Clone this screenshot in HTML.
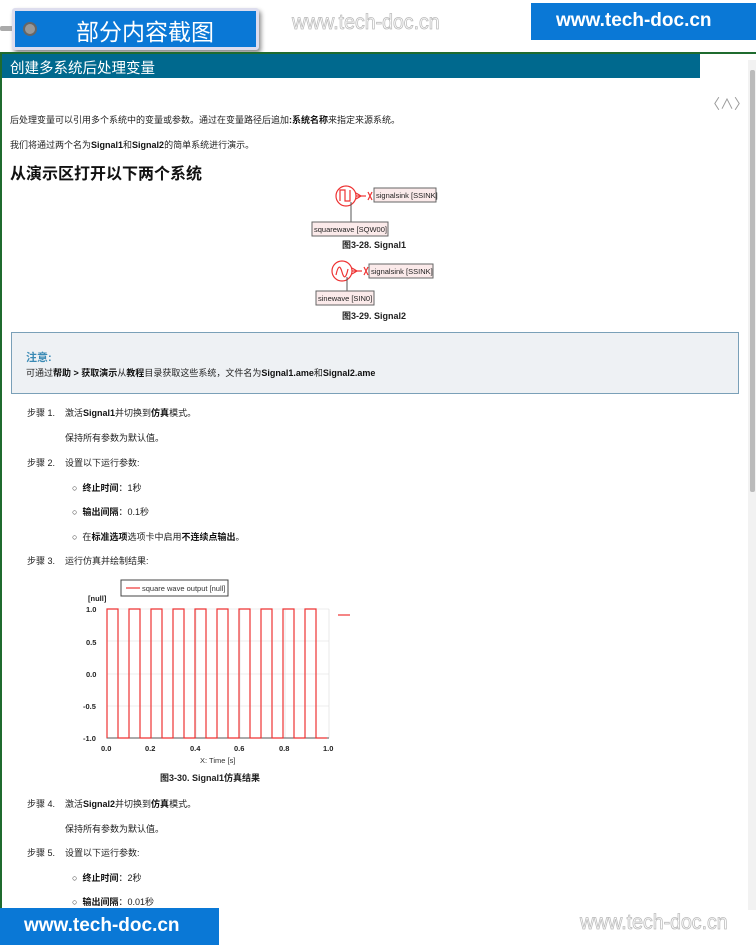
<!DOCTYPE html>
<html><head><meta charset="utf-8"><style>
*{margin:0;padding:0;box-sizing:border-box}
body{width:756px;height:945px;position:relative;overflow:hidden;background:#fff;font-family:"Liberation Sans","Noto Sans CJK SC",sans-serif;font-size:9px;color:#222}
.a{position:absolute;white-space:nowrap}
b{font-weight:bold;color:#111}
</style></head><body>
<!-- top badge -->
<div class="a" style="left:0;top:26px;width:30px;height:5px;background:#aaa;border-radius:2px"></div>
<div class="a" style="left:12px;top:8px;width:247px;height:42px;background:#0a78d6;border:3px solid #dde;box-shadow:2px 3px 5px #888;border-radius:3px"></div>
<div class="a" style="left:23px;top:22px;width:14px;height:14px;border-radius:50%;background:#999;border:2px solid #666"></div>
<div class="a" style="left:76px;top:13px;font-size:23px;color:#fff;font-family:'Noto Sans CJK SC',sans-serif">部分内容截图</div>
<div class="a" style="left:292px;top:11px;font-size:21px;color:#fff;-webkit-text-stroke:0.8px #bbb;transform:scaleX(0.93);transform-origin:left">www.tech-doc.cn</div>
<div class="a" style="left:531px;top:3px;width:225px;height:37px;background:#0a78d6"></div>
<div class="a" style="left:556px;top:10px;font-size:19px;color:#fff;font-weight:bold">www.tech-doc.cn</div>
<!-- frame -->
<div class="a" style="left:0;top:52px;width:756px;height:860px;border-left:2px solid #1f6b2e;border-top:2px solid #1f6b2e"></div>
<div class="a" style="left:2px;top:54px;width:698px;height:24px;background:#00698e"></div>
<div class="a" style="left:10px;top:57px;font-size:14.5px;color:#fff;font-family:'Noto Sans CJK SC',sans-serif">创建多系统后处理变量</div>
<div class="a" style="left:748px;top:60px;width:8px;height:850px;background:#f2f2f2"></div>
<div class="a" style="left:750px;top:70px;width:5px;height:422px;background:#bbb;border-radius:2px"></div>
<div class="a" style="left:706px;top:94px;font-size:14px;color:#999">〈∧〉</div>
<div class="a" style="left:10px;top:113px">后处理变量可以引用多个系统中的变量或参数。通过在变量路径后追加<b>:系统名称</b>来指定来源系统。</div>
<div class="a" style="left:10px;top:138px">我们将通过两个名为<b>Signal1</b>和<b>Signal2</b>的简单系统进行演示。</div>
<div class="a" style="left:10px;top:160px;font-size:16px;font-weight:bold;color:#111;font-family:'Noto Sans CJK SC',sans-serif">从演示区打开以下两个系统</div>
<!-- diagrams -->
<svg class="a" style="left:300px;top:180px" width="150" height="140">
<g stroke="#e33" fill="none" stroke-width="1.2"><circle cx="46" cy="16" r="10"/><path d="M40 21V10h5v11h5V10"/><path d="M56 16h10"/><path d="M56 13l5 3-5 3"/><path d="M68 12l4 8M72 12l-4 8"/></g>
<path d="M51 22v26" stroke="#555"/>
<rect x="74" y="8" width="62" height="14" fill="#fbeaea" stroke="#666"/>
<text x="76" y="18" font-size="7.5" fill="#222" font-family="Liberation Sans">signalsink [SSINK]</text>
<rect x="12" y="42" width="76" height="14" fill="#fbeaea" stroke="#666"/>
<text x="14" y="52" font-size="7.5" fill="#222" font-family="Liberation Sans">squarewave [SQW00]</text>
<g stroke="#e33" fill="none" stroke-width="1.2"><circle cx="42" cy="91" r="10"/><path d="M36 95q3-14 6-3t6-3"/><path d="M52 91h10"/><path d="M52 88l5 3-5 3"/><path d="M64 87l4 8M68 87l-4 8"/></g>
<path d="M47 97v17" stroke="#555"/>
<rect x="69" y="84" width="64" height="14" fill="#fbeaea" stroke="#666"/>
<text x="71" y="94" font-size="7.5" fill="#222" font-family="Liberation Sans">signalsink [SSINK]</text>
<rect x="16" y="111" width="58" height="14" fill="#fbeaea" stroke="#666"/>
<text x="18" y="121" font-size="7.5" fill="#222" font-family="Liberation Sans">sinewave [SIN0]</text>
</svg>
<div class="a" style="left:342px;top:238px;font-weight:bold">图3-28. Signal1</div>
<div class="a" style="left:342px;top:309px;font-weight:bold">图3-29. Signal2</div>
<!-- note -->
<div class="a" style="left:11px;top:332px;width:728px;height:62px;background:#eef1f4;border:1px solid #7aa0b8"></div>
<div class="a" style="left:26px;top:349px;font-size:11px;font-weight:bold;color:#3a8ab5">注意:</div>
<div class="a" style="left:26px;top:366px">可通过<b>帮助 &gt; 获取演示</b>从<b>教程</b>目录获取这些系统，文件名为<b>Signal1.ame</b>和<b>Signal2.ame</b></div>
<!-- steps -->
<div class="a" style="left:27px;top:406px">步骤 1.</div><div class="a" style="left:65px;top:406px">激活<b>Signal1</b>并切换到<b>仿真</b>模式。</div>
<div class="a" style="left:65px;top:431px">保持所有参数为默认值。</div>
<div class="a" style="left:27px;top:456px">步骤 2.</div><div class="a" style="left:65px;top:456px">设置以下运行参数:</div>
<div class="a" style="left:72px;top:481px">○ &nbsp;<b>终止时间</b>：1秒</div>
<div class="a" style="left:72px;top:505px">○ &nbsp;<b>输出间隔</b>：0.1秒</div>
<div class="a" style="left:72px;top:530px">○ &nbsp;在<b>标准选项</b>选项卡中启用<b>不连续点输出</b>。</div>
<div class="a" style="left:27px;top:554px">步骤 3.</div><div class="a" style="left:65px;top:554px">运行仿真并绘制结果:</div>
<!-- chart -->
<svg class="a" style="left:70px;top:570px" width="300" height="200" font-family="Liberation Sans" font-size="7.5">
<rect x="51" y="10" width="107" height="16" fill="#fff" stroke="#444"/>
<path d="M56 18h14" stroke="#e33" stroke-width="1.2"/>
<text x="72" y="21" fill="#333">square wave output [null]</text>
<text x="18" y="31" font-weight="bold" fill="#222">[null]</text>
<g stroke="#ddd" stroke-width="0.6"><path d="M37 39h222M37 71h222M37 104h222M37 136h222M81 39v129M126 39v129M170 39v129M215 39v129M259 39v129"/></g>
<path d="M37 39v129h222" stroke="#555" fill="none"/>
<path d="M37 168V39h11v129h11V39h11v129h11V39h11v129h11V39h11v129h11V39h11v129h11V39h11v129h11V39h11v129h11V39h11v129h11V39h11v129h11V39h11v129h11" stroke="#e33" fill="none" stroke-width="1.2"/>
<path d="M268 45h12" stroke="#e33" stroke-width="1.2"/>
<g font-weight="bold" fill="#222"><text x="16" y="42">1.0</text><text x="16" y="75">0.5</text><text x="16" y="107">0.0</text><text x="13" y="139">-0.5</text><text x="13" y="171">-1.0</text>
<text x="31" y="181">0.0</text><text x="75" y="181">0.2</text><text x="120" y="181">0.4</text><text x="164" y="181">0.6</text><text x="209" y="181">0.8</text><text x="253" y="181">1.0</text></g>
<text x="130" y="193" fill="#333">X: Time [s]</text>
</svg>
<div class="a" style="left:160px;top:771px;font-weight:bold">图3-30. Signal1仿真结果</div>
<div class="a" style="left:27px;top:797px">步骤 4.</div><div class="a" style="left:65px;top:797px">激活<b>Signal2</b>并切换到<b>仿真</b>模式。</div>
<div class="a" style="left:65px;top:822px">保持所有参数为默认值。</div>
<div class="a" style="left:27px;top:846px">步骤 5.</div><div class="a" style="left:65px;top:846px">设置以下运行参数:</div>
<div class="a" style="left:72px;top:871px">○ &nbsp;<b>终止时间</b>：2秒</div>
<div class="a" style="left:72px;top:895px">○ &nbsp;<b>输出间隔</b>：0.01秒</div>
<!-- bottom -->
<div class="a" style="left:0;top:908px;width:219px;height:37px;background:#0a78d6"></div>
<div class="a" style="left:24px;top:915px;font-size:19px;color:#fff;font-weight:bold">www.tech-doc.cn</div>
<div class="a" style="left:580px;top:911px;font-size:21px;color:#fff;-webkit-text-stroke:0.8px #bbb;transform:scaleX(0.93);transform-origin:left">www.tech-doc.cn</div>
</body></html>
